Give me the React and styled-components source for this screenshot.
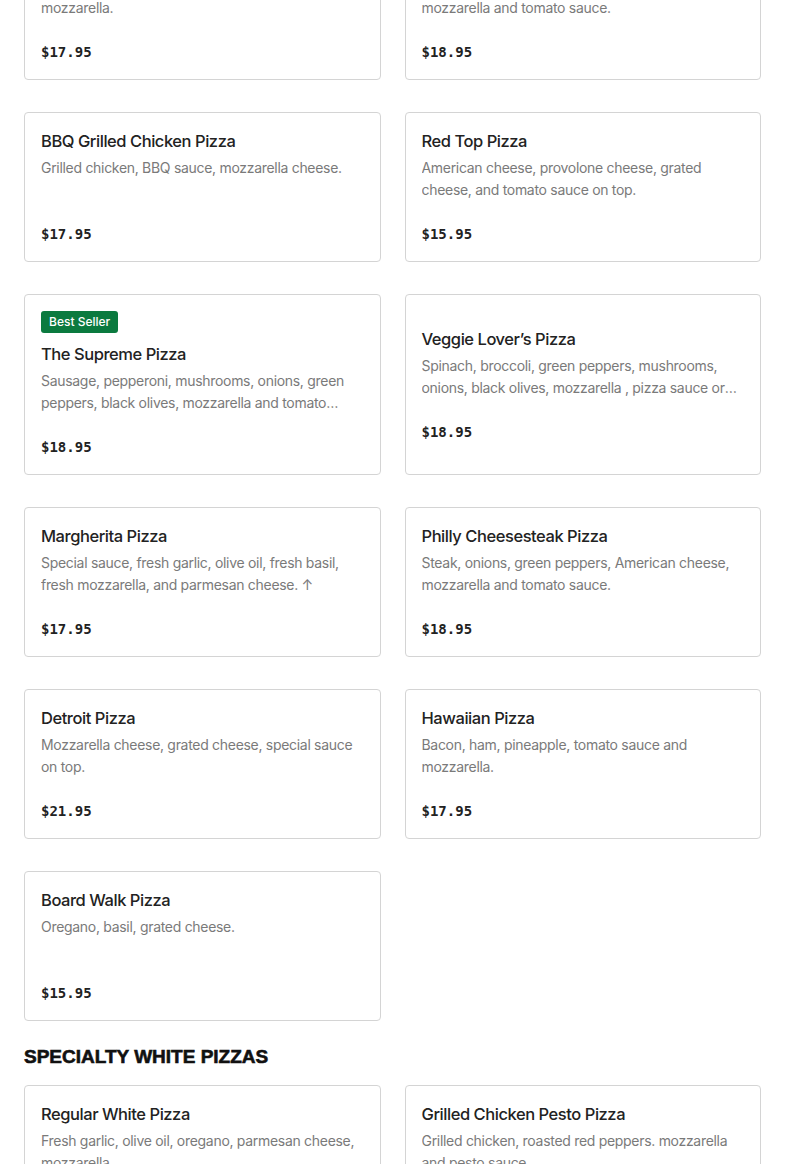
import React from 'react';
import styled, { createGlobalStyle } from 'styled-components';

const GlobalStyle = createGlobalStyle`
  html, body {
    margin: 0;
    padding: 0;
    background: #fff;
  }
  body {
    font-family: 'Inter', 'Liberation Sans', sans-serif;
    color: #222;
    overflow: hidden;
  }
`;

const Page = styled.div`
  padding: 0 24px;
  margin-top: -70px;
`;

const Section = styled.section`
  display: flex;
  flex-direction: column;
`;

const SectionTitle = styled.h2`
  margin: 24px 0 16px;
  font-family: 'Liberation Sans', Arial, sans-serif;
  font-weight: 900;
  font-size: 19px;
  line-height: 24px;
  letter-spacing: 0;
  color: #111;
  text-transform: uppercase;
  -webkit-text-stroke: 0.6px #111;
`;

const Grid = styled.div`
  display: grid;
  grid-template-columns: 1fr 1fr;
  column-gap: 24px;
  row-gap: 32px;
`;

const Card = styled.div`
  border: 1px solid #d4d4d4;
  border-radius: 4px;
  padding: 16px 16px 15px;
  min-height: 117px;
  display: flex;
  flex-direction: column;
  justify-content: center;
  background: #fff;
`;

const Badge = styled.span`
  align-self: flex-start;
  background: #0b7a3f;
  color: #fff;
  font-size: 12px;
  font-weight: 500;
  line-height: 22px;
  height: 22px;
  padding: 0 8px;
  border-radius: 3px;
  margin: 0 0 9px;
`;

const Name = styled.h3`
  margin: 0;
  font-size: 16.5px;
  font-weight: 500;
  line-height: 24px;
  color: #222;
  letter-spacing: -0.45px;
`;

const Desc = styled.p`
  margin: 4px 0 0;
  font-size: 14px;
  line-height: 22px;
  min-height: 44px;
  color: #7a7a7a;
  letter-spacing: -0.3px;
  display: -webkit-box;
  -webkit-line-clamp: 2;
  -webkit-box-orient: vertical;
  overflow: hidden;
`;

const Price = styled.div`
  margin-top: 21px;
  font-family: 'DejaVu Sans Mono', 'Liberation Mono', monospace;
  font-weight: 700;
  font-size: 14px;
  line-height: 24px;
  color: #222;
`;

const redPizzas = [
  { name: 'Pepperoni Pizza', desc: 'Pepperoni, special sauce, grated cheese and mozzarella.', price: '$17.95' },
  { name: 'Meat Lover\u2019s Pizza', desc: 'Pepperoni, sausage, bacon, ham, meatballs, mozzarella and tomato sauce.', price: '$18.95' },
  { name: 'BBQ Grilled Chicken Pizza', desc: 'Grilled chicken, BBQ sauce, mozzarella cheese.', price: '$17.95' },
  { name: 'Red Top Pizza', desc: 'American cheese, provolone cheese, grated cheese, and tomato sauce on top.', price: '$15.95' },
  { name: 'The Supreme Pizza', badge: 'Best Seller', desc: 'Sausage, pepperoni, mushrooms, onions, green peppers, black olives, mozzarella and tomato sauce.', price: '$18.95' },
  { name: 'Veggie Lover\u2019s Pizza', desc: 'Spinach, broccoli, green peppers, mushrooms, onions, black olives, mozzarella , pizza sauce or white.', price: '$18.95' },
  { name: 'Margherita Pizza', desc: 'Special sauce, fresh garlic, olive oil, fresh basil, fresh mozzarella, and parmesan cheese. \u2191', price: '$17.95' },
  { name: 'Philly Cheesesteak Pizza', desc: 'Steak, onions, green peppers, American cheese, mozzarella and tomato sauce.', price: '$18.95' },
  { name: 'Detroit Pizza', desc: 'Mozzarella cheese, grated cheese, special sauce on top.', price: '$21.95' },
  { name: 'Hawaiian Pizza', desc: 'Bacon, ham, pineapple, tomato sauce and mozzarella.', price: '$17.95' },
  { name: 'Board Walk Pizza', desc: 'Oregano, basil, grated cheese.', price: '$15.95' },
];

const whitePizzas = [
  { name: 'Regular White Pizza', desc: 'Fresh garlic, olive oil, oregano, parmesan cheese, mozzarella.', price: '$16.95' },
  { name: 'Grilled Chicken Pesto Pizza', desc: 'Grilled chicken, roasted red peppers. mozzarella and pesto sauce.', price: '$18.95' },
];

const MenuCard = ({ item }) => (
  <Card>
    {item.badge && <Badge>{item.badge}</Badge>}
    <Name>{item.name}</Name>
    <Desc>{item.desc}</Desc>
    <Price>{item.price}</Price>
  </Card>
);

const App = () => {
  return (
    <Page>
      <GlobalStyle />
      <Section>
        <Grid>
          {redPizzas.map((item, i) => (
            <MenuCard key={i} item={item} />
          ))}
        </Grid>
      </Section>
      <Section>
        <SectionTitle>Specialty White Pizzas</SectionTitle>
        <Grid>
          {whitePizzas.map((item, i) => (
            <MenuCard key={i} item={item} />
          ))}
        </Grid>
      </Section>
    </Page>
  );
};

export default App;
